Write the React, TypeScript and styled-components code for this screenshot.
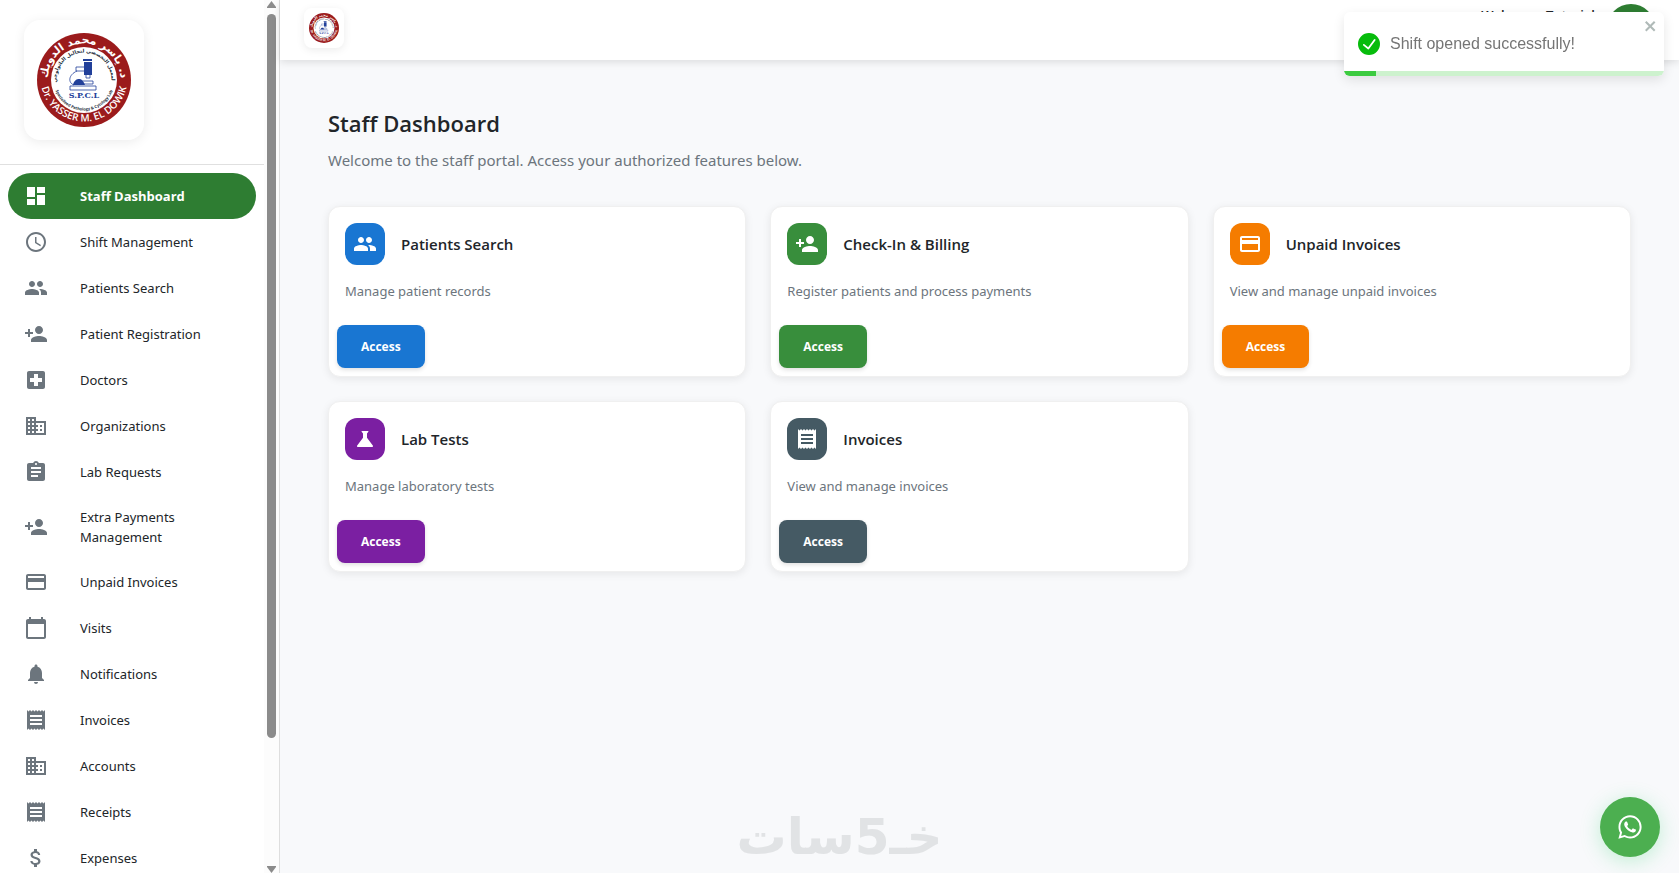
import React, { useId } from "react";
import styled, { createGlobalStyle } from "styled-components";
import type { IconType } from "react-icons";
import {
  MdAccessTime,
  MdAssignment,
  MdAttachMoney,
  MdBusiness,
  MdCalendarToday,
  MdDashboard,
  MdLocalHospital,
  MdNotifications,
  MdPayment,
  MdPeople,
  MdPersonAdd,
  MdReceipt,
  MdScience,
  MdWhatsapp,
} from "react-icons/md";

const GlobalStyle = createGlobalStyle`
  *, *::before, *::after { box-sizing: border-box; }
  body {
    margin: 0;
    background: #f8f9fb;
    color: #212529;
    font-family: "Noto Sans", "Open Sans", sans-serif;
    font-size: 13px;
  }
  h1, h2, p, ul { margin: 0; padding: 0; }
  ul { list-style: none; }
  button { font-family: inherit; cursor: pointer; }
`;

const Shell = styled.div`
  display: flex;
  height: 100vh;
  overflow: hidden;
`;

const Sidebar = styled.aside`
  display: flex;
  flex: 0 0 280px;
  background: #fff;
  border-right: 1px solid #dedede;
`;

const SidebarBody = styled.div`
  flex: 1;
  min-width: 0;
  overflow: hidden;
`;

const Brand = styled.div`
  padding: 20px 24px 24px;
  border-bottom: 1px solid #e0e0e0;
`;

const LogoCard = styled.div<{ $small?: boolean }>`
  display: flex;
  align-items: center;
  justify-content: center;
  width: ${(p) => (p.$small ? 40 : 120)}px;
  height: ${(p) => (p.$small ? 40 : 120)}px;
  border-radius: ${(p) => (p.$small ? 8 : 16)}px;
  background: #fff;
  box-shadow: 0 2px ${(p) => (p.$small ? 8 : 12)}px rgba(0, 0, 0, 0.08);

  svg {
    overflow: visible;
  }
`;

const NavList = styled.ul`
  padding: 8px;
`;

const NavLink = styled.a<{ $active?: boolean }>`
  display: flex;
  align-items: center;
  gap: 32px;
  min-height: 46px;
  padding: 12px 16px;
  border-radius: 24px;
  line-height: 20px;
  text-decoration: none;
  font-family: ${(p) => (p.$active ? '"Open Sans", sans-serif' : "inherit")};
  font-weight: ${(p) => (p.$active ? 700 : 400)};
  color: ${(p) => (p.$active ? "#fff" : "#212529")};
  background: ${(p) => (p.$active ? "#2e7d32" : "transparent")};

  svg {
    flex: none;
    margin: -2px 0;
    color: ${(p) => (p.$active ? "#fff" : "#6c757d")};
  }
`;

const ScrollBar = styled.div`
  display: flex;
  flex-direction: column;
  align-items: center;
  gap: 6px;
  width: 15px;
  background: #fcfcfc;
`;

const ScrollTrack = styled.div`
  display: flex;
  flex: 1;
  flex-direction: column;
  width: 9px;

  &::after {
    content: "";
    flex: 1;
  }
`;

const ScrollThumb = styled.div`
  flex: 6;
  border-radius: 5px;
  background: #8b8b8b;
`;

const Main = styled.div`
  display: flex;
  flex: 1;
  flex-direction: column;
  min-width: 0;
`;

const Header = styled.header`
  display: flex;
  align-items: center;
  justify-content: space-between;
  padding: 4px 24px 8px;
  background: #fff;
  box-shadow: 0 2px 8px rgba(0, 0, 0, 0.12);
`;

const UserArea = styled.div`
  display: flex;
  align-items: flex-start;
  gap: 12px;
  font-family: "Open Sans", sans-serif;
  font-weight: 600;
  line-height: 22px;
`;

const Avatar = styled.span`
  display: flex;
  align-items: center;
  justify-content: center;
  width: 48px;
  height: 48px;
  border-radius: 50%;
  background: #2e7d32;
  color: #fff;
  font-size: 22px;
`;

const Content = styled.main`
  padding: 48px;
`;

const PageTitle = styled.h1`
  margin-bottom: 8px;
  font-family: "Open Sans", sans-serif;
  font-size: 22px;
  font-weight: 600;
  line-height: 30px;
`;

const Intro = styled.p`
  margin-bottom: 32px;
  font-size: 15px;
  line-height: 28px;
  color: #6c757d;
`;

const Grid = styled.div`
  display: grid;
  grid-template-columns: repeat(3, minmax(0, 1fr));
  gap: 24px;
`;

const Card = styled.section`
  border: 1px solid #f0f0f0;
  border-radius: 12px;
  background: #fff;
  box-shadow: 0 2px 8px rgba(0, 0, 0, 0.08);
`;

const CardBody = styled.div`
  padding: 16px;
`;

const CardHead = styled.div`
  display: flex;
  align-items: center;
  gap: 16px;
  margin-bottom: 16px;
`;

const Tile = styled.span<{ $color: string }>`
  display: flex;
  align-items: center;
  justify-content: center;
  width: 40px;
  height: 42px;
  border-radius: 12px;
  background: ${(p) => p.$color};
  color: #fff;
`;

const CardTitle = styled.h2`
  font-family: "Open Sans", sans-serif;
  font-size: 15px;
  font-weight: 600;
  line-height: 24px;
`;

const CardText = styled.p`
  line-height: 20px;
  color: #6c757d;
`;

const CardActions = styled.div`
  padding: 8px;
`;

const AccessButton = styled.button<{ $color: string }>`
  display: block;
  padding: 12px 24px;
  border: 0;
  border-radius: 8px;
  background: ${(p) => p.$color};
  box-shadow: 0 2px 4px rgba(0, 0, 0, 0.12);
  color: #fff;
  font-family: "Open Sans", sans-serif;
  font-size: 12px;
  font-weight: 700;
  line-height: 19px;
`;

const Toast = styled.div`
  position: fixed;
  top: 12px;
  right: 15px;
  width: 320px;
  border-radius: 6px;
  overflow: hidden;
  background: #fff;
  box-shadow: 0 4px 12px rgba(0, 0, 0, 0.1);
  color: #757575;
  font-family: "Liberation Sans", Arial, sans-serif;
  font-size: 16px;
`;

const ToastBody = styled.div`
  display: flex;
  align-items: center;
  gap: 10px;
  padding: 21px 14px 16px;
  line-height: 22px;
`;

const ToastClose = styled.button`
  position: absolute;
  top: 6px;
  right: 6px;
  display: flex;
  padding: 0;
  border: 0;
  background: transparent;
  color: #b0bab8;
`;

const ToastTrack = styled.div`
  height: 5px;
  background: #cdf2ce;
`;

const ToastProgress = styled.div`
  height: 5px;
  background: #3ccb40;
`;

const ChatButton = styled.a`
  position: fixed;
  right: 19px;
  bottom: 16px;
  display: flex;
  align-items: center;
  justify-content: center;
  width: 60px;
  height: 60px;
  border-radius: 50%;
  background: #4caf50;
  box-shadow: 0 4px 20px rgba(37, 211, 102, 0.25);
  color: #fff;
`;

const Watermark = styled.div`
  position: fixed;
  right: 0;
  bottom: 0;
  left: 0;
  color: #e1e3e5;
  font-family: "DejaVu Sans", sans-serif;
  font-size: 50px;
  font-weight: 700;
  line-height: 72px;
  text-align: center;
  pointer-events: none;
`;

function Emblem({ size }: { size: number }) {
  const id = useId();
  const ref = (name: string) => `${id}${name}`;
  return (
    <svg width={size} height={size} viewBox="0 0 94 94" role="img" aria-label="Dr. Yasser M. El Dowik, S.P.C.L">
      <defs>
        <path id={ref("top")} d="M10.500 51V47A36.500 36.500 0 0 1 83.500 47V51" />
        <path id={ref("bottom")} d="M3.500 45A43.500 43.500 0 0 0 90.500 45" />
        <path id={ref("innerTop")} d="M19.500 47A27.500 27.500 0 0 1 74.500 47" />
        <path id={ref("innerBottom")} d="M16.500 47A30.500 30.500 0 0 0 77.500 47" />
      </defs>
      <circle cx="47" cy="47" r="47" fill="#9b1b1c" />
      <circle cx="47" cy="47" r="33" fill="#fff" />
      <g textAnchor="middle">
        <text fill="#fff" fontFamily="DejaVu Sans, sans-serif" fontWeight="700" fontSize="11" direction="rtl">
          <textPath href={`#${ref("top")}`} startOffset="50%">د. ياسر محمد الدويك</textPath>
        </text>
        <text fill="#fff" fontFamily="Open Sans, sans-serif" fontWeight="600" fontSize="10">
          <textPath href={`#${ref("bottom")}`} startOffset="50%">Dr. YASSER M. EL DOWIK</textPath>
        </text>
        <text fill="#1c2c3a" fontFamily="DejaVu Sans, sans-serif" fontWeight="700" fontSize="5" direction="rtl">
          <textPath href={`#${ref("innerTop")}`} startOffset="50%">المعمل التخصصي لتحاليل الباثولوجي</textPath>
        </text>
        <text fill="#1c2c3a" fontFamily="Open Sans, sans-serif" fontWeight="700" fontSize="4">
          <textPath href={`#${ref("innerBottom")}`} startOffset="50%">Specialized Pathology &amp; Cytology Lab</textPath>
        </text>
        <text x="47" y="65" fill="#22409a" fontFamily="DejaVu Serif, serif" fontWeight="700" fontSize="8">S.P.C.L</text>
      </g>
      <g fill="#22409a">
        <path d="M46 26h9v2h-9zM47 29h8v13h-8z" />
        <path d="M36 52c1-5 4-6 6-6s4 1 6 6z" />
      </g>
      <g fill="none" stroke="#22409a" strokeWidth="0.800">
        <path d="M47 34h-8v4h8M40 38c-9 4-9 12-3 14M49 42v3h4v-3M43 48h13v3H46M33 53h26v4H33z" />
      </g>
    </svg>
  );
}

const navItems: { label: string; icon: IconType; active?: boolean }[] = [
  { label: "Staff Dashboard", icon: MdDashboard, active: true },
  { label: "Shift Management", icon: MdAccessTime },
  { label: "Patients Search", icon: MdPeople },
  { label: "Patient Registration", icon: MdPersonAdd },
  { label: "Doctors", icon: MdLocalHospital },
  { label: "Organizations", icon: MdBusiness },
  { label: "Lab Requests", icon: MdAssignment },
  { label: "Extra Payments Management", icon: MdPersonAdd },
  { label: "Unpaid Invoices", icon: MdPayment },
  { label: "Visits", icon: MdCalendarToday },
  { label: "Notifications", icon: MdNotifications },
  { label: "Invoices", icon: MdReceipt },
  { label: "Accounts", icon: MdBusiness },
  { label: "Receipts", icon: MdReceipt },
  { label: "Expenses", icon: MdAttachMoney },
];

const features: { title: string; text: string; color: string; icon: IconType }[] = [
  { title: "Patients Search", text: "Manage patient records", color: "#1976d2", icon: MdPeople },
  { title: "Check-In & Billing", text: "Register patients and process payments", color: "#388e3c", icon: MdPersonAdd },
  { title: "Unpaid Invoices", text: "View and manage unpaid invoices", color: "#f57c00", icon: MdPayment },
  { title: "Lab Tests", text: "Manage laboratory tests", color: "#7b1fa2", icon: MdScience },
  { title: "Invoices", text: "View and manage invoices", color: "#455a64", icon: MdReceipt },
];

export default function App() {
  return (
    <>
      <GlobalStyle />
      <Shell>
        <Sidebar>
          <SidebarBody>
            <Brand>
              <LogoCard>
                <Emblem size={94} />
              </LogoCard>
            </Brand>
            <nav aria-label="Main">
              <NavList>
                {navItems.map(({ label, icon: Icon, active }) => (
                  <li key={label}>
                    <NavLink href="#" $active={active} aria-current={active ? "page" : undefined}>
                      <Icon size={24} aria-hidden />
                      <span>{label}</span>
                    </NavLink>
                  </li>
                ))}
              </NavList>
            </nav>
          </SidebarBody>
          <ScrollBar aria-hidden>
            <svg width="9" height="8" viewBox="0 0 9 8">
              <path d="M4.500 1 9 7v1H0V7z" fill="#8b8b8b" />
            </svg>
            <ScrollTrack>
              <ScrollThumb />
            </ScrollTrack>
            <svg width="9" height="8" viewBox="0 0 9 8">
              <path d="M4.500 8 9 2V1H0v1z" fill="#8b8b8b" />
            </svg>
          </ScrollBar>
        </Sidebar>
        <Main>
          <Header>
            <LogoCard $small>
              <Emblem size={30} />
            </LogoCard>
            <UserArea>
              <span>Welcome, Tutorial</span>
              <Avatar>T</Avatar>
            </UserArea>
          </Header>
          <Content>
            <PageTitle>Staff Dashboard</PageTitle>
            <Intro>Welcome to the staff portal. Access your authorized features below.</Intro>
            <Grid>
              {features.map(({ title, text, color, icon: Icon }) => (
                <Card key={title}>
                  <CardBody>
                    <CardHead>
                      <Tile $color={color}>
                        <Icon size={24} aria-hidden />
                      </Tile>
                      <CardTitle>{title}</CardTitle>
                    </CardHead>
                    <CardText>{text}</CardText>
                  </CardBody>
                  <CardActions>
                    <AccessButton type="button" $color={color}>
                      Access
                    </AccessButton>
                  </CardActions>
                </Card>
              ))}
            </Grid>
          </Content>
        </Main>
      </Shell>
      <Watermark lang="ar" dir="rtl">خـ5سات</Watermark>
      <ChatButton href="#" aria-label="Chat on WhatsApp">
        <MdWhatsapp size={28} />
      </ChatButton>
      <Toast role="status">
        <ToastBody>
          <svg width="22" height="22" viewBox="0 0 24 24" aria-hidden>
            <path
              fill="#07bc0c"
              d="M12 0a12 12 0 1012 12A12.014 12.014 0 0012 0zm6.927 8.200l-6.845 9.289a1.011 1.011 0 01-1.430.188l-4.888-3.908a1 1 0 111.250-1.562l4.076 3.261 6.227-8.451a1 1 0 111.610 1.183z"
            />
          </svg>
          <span>Shift opened successfully!</span>
        </ToastBody>
        <ToastClose type="button" aria-label="Close">
          <svg width="14" height="16" viewBox="0 0 14 16" aria-hidden>
            <path
              fill="currentColor"
              fillRule="evenodd"
              d="M7.710 8.230l3.750 3.750-1.480 1.480-3.750-3.750-3.750 3.750L1 11.980l3.750-3.750L1 4.480 2.480 3l3.750 3.750L9.980 3l1.480 1.480-3.750 3.750z"
            />
          </svg>
        </ToastClose>
        <ToastTrack>
          <ToastProgress style={{ width: "10%" }} />
        </ToastTrack>
      </Toast>
    </>
  );
}
